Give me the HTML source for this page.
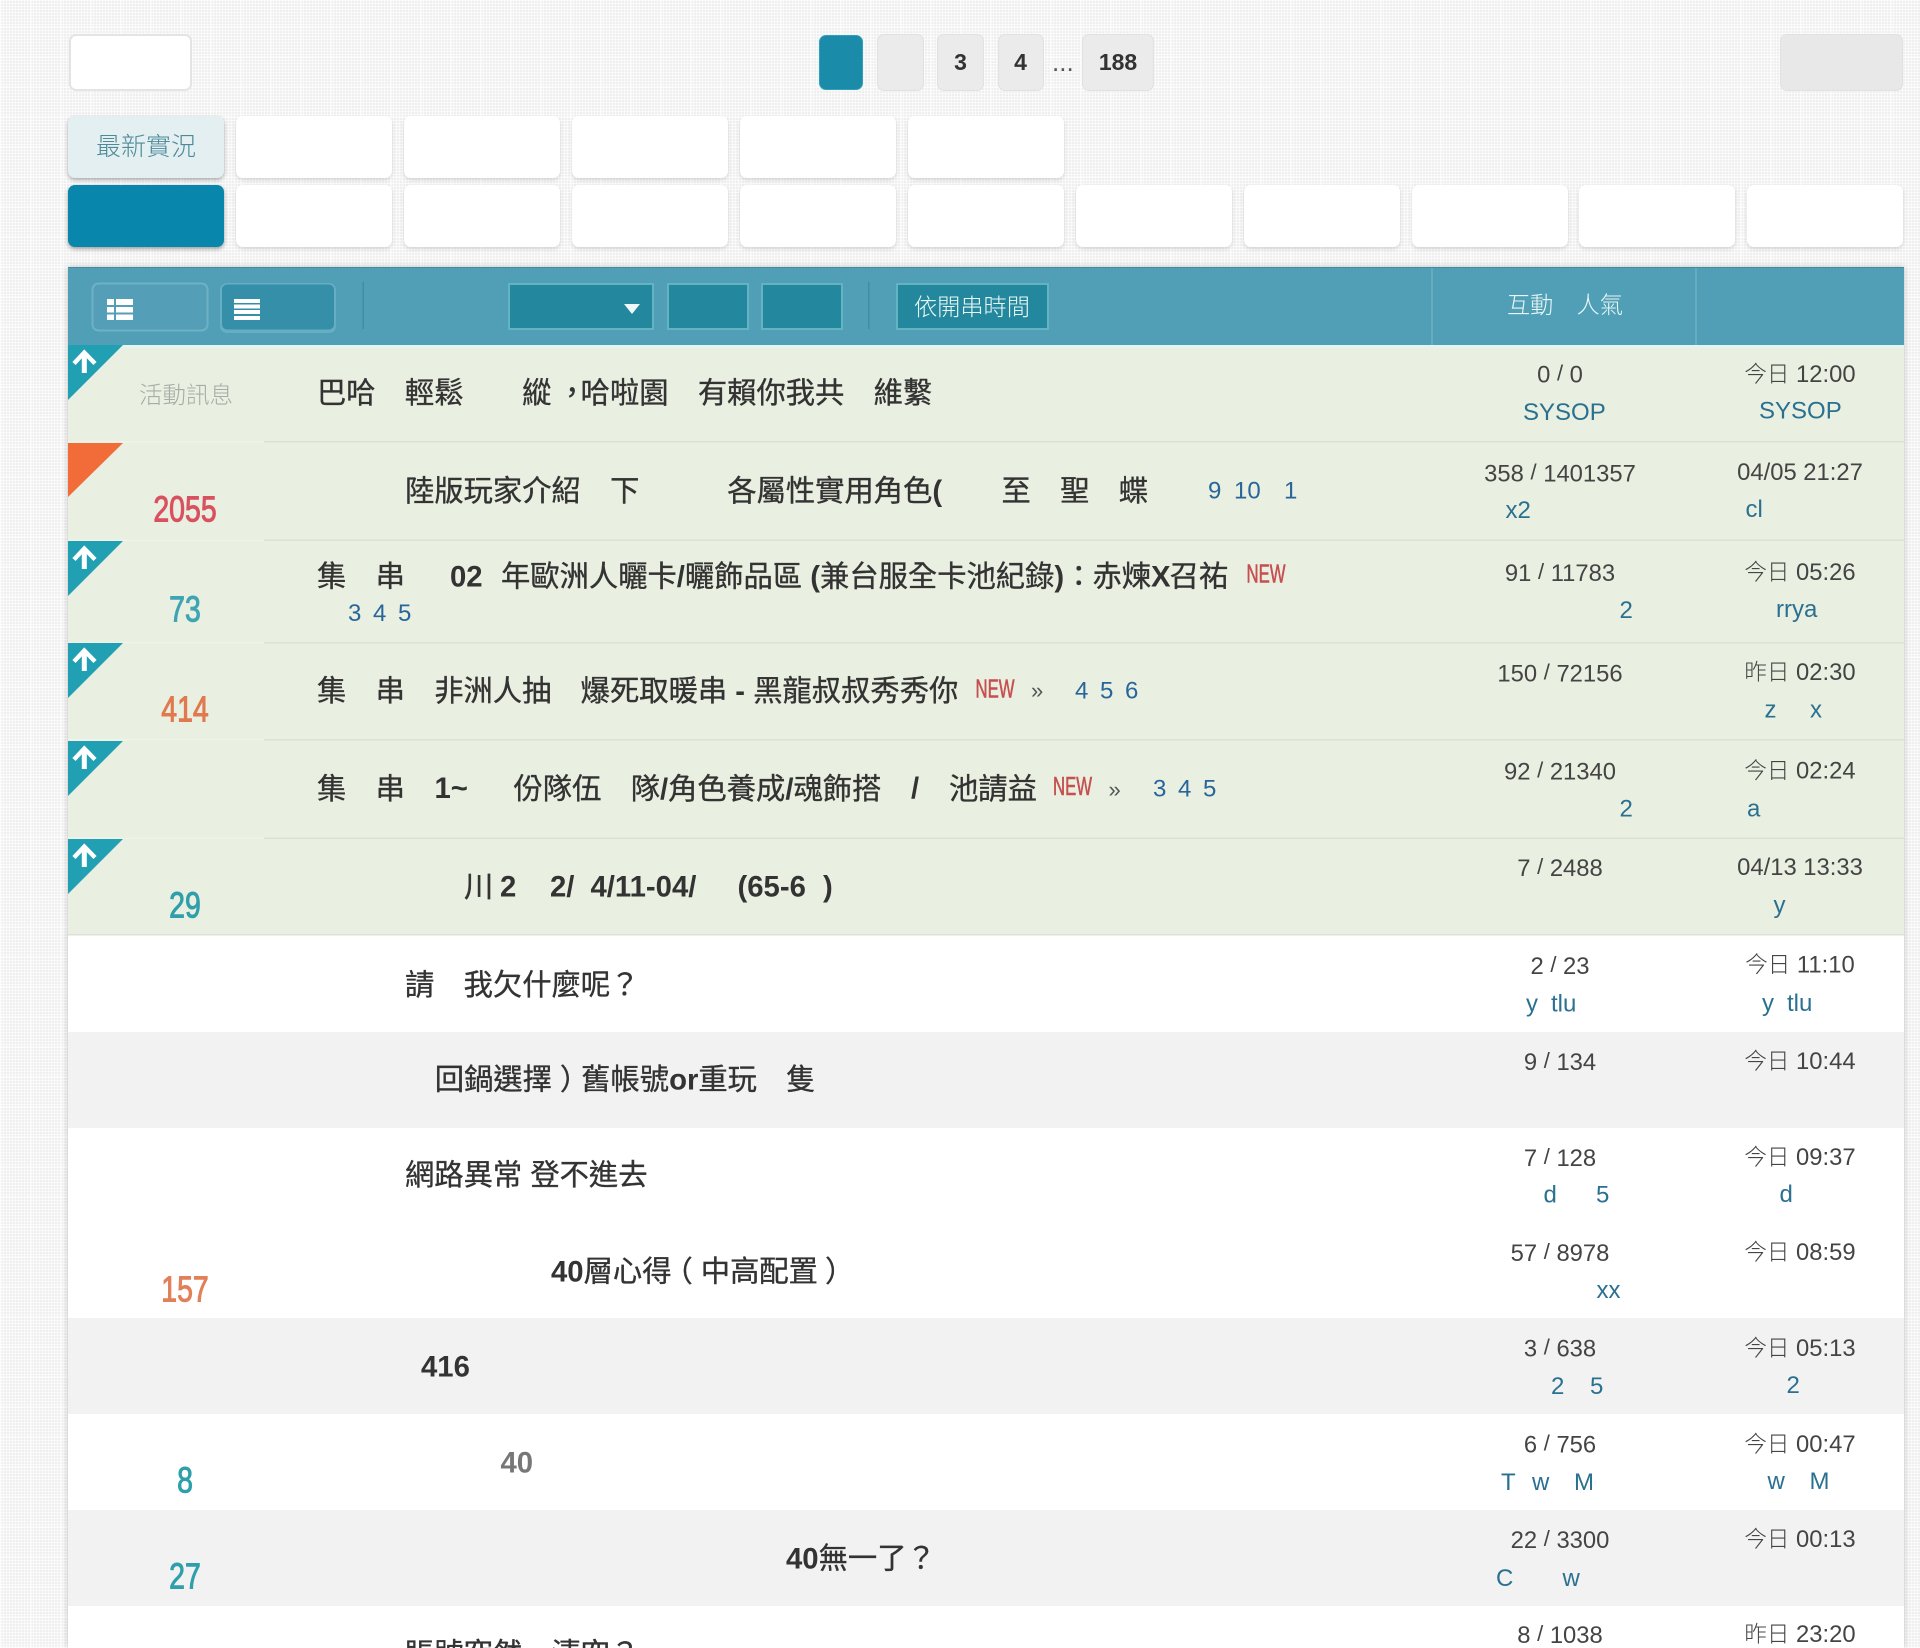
<!DOCTYPE html>
<html lang="zh-Hant"><head><meta charset="utf-8"><title>最新實況</title>
<style>
html,body{margin:0;padding:0;width:1920px;height:1648px;overflow:hidden}
body{position:relative;background-color:#efefef;
background-image:repeating-linear-gradient(0deg,rgba(255,255,255,.6) 0 1px,transparent 1px 3px),repeating-linear-gradient(90deg,rgba(255,255,255,.6) 0 1px,transparent 1px 3px),repeating-linear-gradient(0deg,rgba(255,255,255,.45) 0 2px,transparent 2px 30px),repeating-linear-gradient(90deg,rgba(255,255,255,.45) 0 2px,transparent 2px 30px);}
.tab{position:absolute;width:156px;height:62px;background:#fff;border-radius:7px;box-shadow:0 2px 4px rgba(0,0,0,.13)}
.r1{top:116px}.r2{top:185px}
.pg{position:absolute;top:34px;height:57px;box-sizing:border-box;border:1.5px solid #e1e1e1;background:#ebebeb;border-radius:7px}
.tb{position:absolute;left:68px;top:267px;width:1836px;height:1381px;background:#fff;box-shadow:0 0 6px rgba(0,0,0,.22)}
svg{position:absolute;left:0;top:0}
text{white-space:pre;font-family:"Liberation Sans","Noto Sans CJK TC",sans-serif}
.t{font-size:29.3px;font-weight:400;fill:#333;stroke:#333;stroke-width:.35px}
.b{font-weight:700;stroke:none}
.s{font-size:23.8px;fill:#444}
.m{font-size:23.8px;fill:#444;text-anchor:middle}
.cj{font-size:22.5px;font-weight:300}
.sl{font-size:22px}
.l{font-size:24px;fill:#2a7090}
.p{font-size:24px;fill:#28659a}
.n{font-size:26px;fill:#c5504f;stroke:#c5504f;stroke-width:.6px}
.g{font-size:36px;text-anchor:middle;stroke-width:1px}
.h{font-size:23.2px;font-weight:300;fill:#e8f7f6}
.q{font-size:22px;fill:#555}
</style></head><body>
<div class="pg" style="left:69px;width:123px;background:#fff;border:2px solid #e4e4e4"></div>
<div class="pg" style="left:819px;width:44px;top:35px;height:55px;background:#1a8ba8;border-color:#2fa0bb"></div>
<div class="pg" style="left:877px;width:47px"></div>
<div class="pg" style="left:937px;width:47px"></div>
<div class="pg" style="left:998px;width:46px"></div>
<div class="pg" style="left:1082px;width:72px"></div>
<div class="pg" style="left:1780px;width:123px;background:#e8e8e8"></div>

<div class="tab r1" style="left:68px;background:#e4eff1;box-shadow:0 2px 4px rgba(0,0,0,.3)"></div>
<div class="tab r1" style="left:236px"></div><div class="tab r1" style="left:404px"></div><div class="tab r1" style="left:572px"></div><div class="tab r1" style="left:740px"></div><div class="tab r1" style="left:908px"></div>
<div class="tab r2" style="left:68px;background:#0986ab;box-shadow:0 2px 4px rgba(0,0,0,.35)"></div>
<div class="tab r2" style="left:236px"></div><div class="tab r2" style="left:404px"></div><div class="tab r2" style="left:572px"></div><div class="tab r2" style="left:740px"></div><div class="tab r2" style="left:908px"></div><div class="tab r2" style="left:1076px"></div><div class="tab r2" style="left:1244px"></div><div class="tab r2" style="left:1412px"></div><div class="tab r2" style="left:1579px"></div><div class="tab r2" style="left:1747px"></div>
<div class="tb"></div>

<svg width="1920" height="1648" viewBox="0 0 1920 1648" xmlns="http://www.w3.org/2000/svg">
<!-- rows -->
<rect x="68" y="345" width="1836" height="590" fill="#e9efe1"/>
<rect x="68" y="1032" width="1836" height="96" fill="#f2f2f2"/>
<rect x="68" y="1318" width="1836" height="96" fill="#f2f2f2"/>
<rect x="68" y="1510" width="1836" height="96" fill="#f2f2f2"/>
<g fill="#dce1d5">
<rect x="264" y="441" width="1640" height="1.5"/><rect x="264" y="539.5" width="1640" height="1.5"/><rect x="264" y="642" width="1640" height="1.5"/><rect x="264" y="739" width="1640" height="1.5"/><rect x="264" y="837.5" width="1640" height="1.5"/><rect x="68" y="934" width="1836" height="1.5"/>
</g>
<g fill="#eff3ea">
<rect x="68" y="441" width="196" height="1.5"/><rect x="68" y="539.5" width="196" height="1.5"/><rect x="68" y="642" width="196" height="1.5"/><rect x="68" y="739" width="196" height="1.5"/><rect x="68" y="837.5" width="196" height="1.5"/>
</g>
<!-- header -->
<rect x="68" y="267" width="1836" height="78" fill="#509fb7"/>
<rect x="68" y="267" width="1836" height="1" fill="#44899e"/>
<rect x="68" y="345" width="1836" height="3" fill="#e2f5ef"/>
<rect x="1431.5" y="268" width="1" height="77" fill="#7cb8ca"/>
<rect x="1695.5" y="268" width="1" height="77" fill="#7cb8ca"/>
<rect x="92.5" y="283.5" width="115" height="47" rx="6" fill="#549fb7" stroke="#6eb1c5" stroke-width="2"/>
<rect x="220" y="283" width="116" height="50" rx="7" fill="#67aec4"/>
<rect x="222" y="284.5" width="112" height="45" rx="5" fill="#368fa9"/>
<g fill="#fff">
<rect x="107" y="299" width="7" height="6"/><rect x="107" y="307" width="7" height="5.5"/><rect x="107" y="314.5" width="7" height="5.5"/>
<rect x="116" y="299" width="17" height="6"/><rect x="116" y="307" width="17" height="5.5"/><rect x="116" y="314.5" width="17" height="5.5"/>
<rect x="234" y="299" width="26" height="4"/><rect x="234" y="304.5" width="26" height="4"/><rect x="234" y="310" width="26" height="4"/><rect x="234" y="316" width="26" height="4"/>
</g>
<rect x="362.5" y="282" width="1.5" height="47" fill="#3f8ea6"/>
<rect x="868" y="282" width="1.5" height="47" fill="#3f8ea6"/>
<g fill="#23889d" stroke="#63b3c3" stroke-width="2">
<rect x="509" y="284" width="144" height="45"/><rect x="668" y="284" width="80" height="45"/><rect x="762" y="284" width="80" height="45"/><rect x="897" y="284" width="151" height="45"/>
</g>
<polygon points="624,304 640,304 632,314" fill="#eef8f8"/>
<text class="h" x="914" y="315">依開串時間</text>
<text class="h" x="1507" y="313">互動　人氣</text>
<text x="96" y="155" style="font-size:25px;font-weight:300;fill:#4d8a99">最新實況</text>
<!-- pagination -->
<g style="font-weight:700;font-size:23px;fill:#333;text-anchor:middle">
<text x="960.5" y="70" class="b">3</text><text x="1020.5" y="70" class="b">4</text><text x="1118" y="70" class="b">188</text>
</g>
<text x="1052" y="71" style="font-size:26px;fill:#555">...</text>
<!-- triangles -->
<defs><g id="ar"><path d="M84.3 352V373" stroke="#fff" stroke-width="5" fill="none"/><path d="M74 363.5L84.3 352.5L95 363.5" stroke="#fff" stroke-width="4.4" fill="none"/></g></defs>
<polygon points="68,345 123,345 68,400" fill="#22a0b3"/><use href="#ar"/>
<polygon points="68,443 123,443 68,497" fill="#f26c3a"/>
<polygon points="68,541 123,541 68,596" fill="#22a0b3"/><use href="#ar" y="196"/>
<polygon points="68,643 123,643 68,698" fill="#22a0b3"/><use href="#ar" y="298"/>
<polygon points="68,741 123,741 68,796" fill="#22a0b3"/><use href="#ar" y="396"/>
<polygon points="68,839 123,839 68,894" fill="#22a0b3"/><use href="#ar" y="494"/>
<!-- gp -->
<text x="186" y="403" style="font-size:23.5px;font-weight:300;fill:#a8aca6;text-anchor:middle">活動訊息</text>
<g class="gp">
<text class="g" transform="translate(185,521.7) scale(.79,1)" style="fill:#d9505e;stroke:#d9505e">2055</text>
<text class="g" transform="translate(185,621.7) scale(.79,1)" style="fill:#3fa4b3;stroke:#3fa4b3">73</text>
<text class="g" transform="translate(185,721.7) scale(.79,1)" style="fill:#e07a4e;stroke:#e07a4e">414</text>
<text class="g" transform="translate(185,917.3) scale(.79,1)" style="fill:#2f9fab;stroke:#2f9fab">29</text>
<text class="g" transform="translate(185,1301.7) scale(.79,1)" style="fill:#e2805a;stroke:#e2805a">157</text>
<text class="g" transform="translate(185,1492.7) scale(.79,1)" style="fill:#2f9fab;stroke:#2f9fab">8</text>
<text class="g" transform="translate(185,1588.3) scale(.79,1)" style="fill:#2f9fab;stroke:#2f9fab">27</text>
</g>
<!-- titles -->
<text class="t" x="317" y="403">巴哈　輕鬆　　縱<tspan dx="6">，</tspan><tspan dx="-6">哈啦園　有賴你我共　維繫</tspan></text>
<text class="t" x="405" y="501">陸版玩家介紹　下　　　各屬性實用角色<tspan class="b">(</tspan></text>
<text class="t" x="1001.5" y="501">至　聖　蝶</text>
<text class="p" x="1208" y="498.5">9</text><text class="p" x="1234" y="498.5">10</text><text class="p" x="1284" y="498.5">1</text>
<text class="t" x="317" y="586.7">集　串</text>
<text class="t b" x="450" y="586.7">02</text>
<text class="t" x="501" y="586.7">年歐洲人曬卡<tspan class="b">/</tspan>曬飾品區<tspan class="b"> (</tspan>兼台服全卡池紀錄<tspan class="b">)</tspan>：<tspan dx="-1">赤煉</tspan><tspan class="b">X</tspan><tspan dx="-1">召祐</tspan></text>
<text class="n" x="1246.5" y="582.7" textLength="39" lengthAdjust="spacingAndGlyphs">NEW</text>
<text class="p" x="348 373 398" y="621">345</text>
<text class="t" x="317" y="701">集　串　非洲人抽　爆死取暖串<tspan class="b"> - </tspan>黑龍叔叔秀秀你</text>
<text class="n" x="975.5" y="697.7" textLength="39" lengthAdjust="spacingAndGlyphs">NEW</text>
<text class="q" x="1031" y="698">»</text>
<text class="p" x="1075 1100 1125" y="698.7">456</text>
<text class="t" x="317" y="799">集　串</text>
<text class="t b" x="434.5" y="798">1~</text>
<text class="t" x="513.5" y="799">份隊伍　隊<tspan class="b">/</tspan>角色養成<tspan class="b">/</tspan>魂飾搭</text>
<text class="t b" x="911" y="798">/</text>
<text class="t" x="949" y="799">池請益</text>
<text class="n" x="1053" y="795" textLength="39" lengthAdjust="spacingAndGlyphs">NEW</text>
<text class="q" x="1108.5" y="797">»</text>
<text class="p" x="1153 1178 1203" y="796.7">345</text>
<text class="t" x="464" y="897">川</text>
<text class="t b" x="500" y="896.7">2</text>
<text class="t b" x="550" y="896.7">2/</text>
<text class="t b" x="590.5" y="896.7">4/11-04/</text>
<text class="t b" x="737.5" y="896.7">(65-6</text>
<text class="t b" x="823" y="896.7">)</text>
<text class="t" x="405" y="995">請　我欠什麼呢？</text>
<text class="t" x="434.7" y="1089.3">回鍋選擇<tspan dx="8">）</tspan><tspan dx="-8">舊帳號</tspan><tspan class="b">or</tspan>重玩　隻</text>
<text class="t" x="405" y="1185">網路異常 登不進去</text>
<text class="t" x="551" y="1281.7"><tspan class="b">40</tspan>層心得<tspan dx="-8">（</tspan><tspan dx="8">中高配置</tspan><tspan dx="7">）</tspan></text>
<text class="t b" x="421" y="1376.7">416</text>
<text class="t b" x="500.5" y="1472.7" style="fill:#777">40</text>
<text class="t" x="786" y="1568.5"><tspan class="b">40</tspan>無一了？</text>
<text class="t" x="405" y="1664">賬號突然　清空？</text>
<!-- stats -->
<g text-anchor="middle">
<text class="s" x="1560" y="382.7">0 <tspan class="sl" dy="-2">/</tspan><tspan dy="2"> 0</tspan></text>
<text class="s" x="1560" y="481.7">358 <tspan class="sl" dy="-2">/</tspan><tspan dy="2"> 1401357</tspan></text>
<text class="s" x="1560" y="581">91 <tspan class="sl" dy="-2">/</tspan><tspan dy="2"> 11783</tspan></text>
<text class="s" x="1560" y="681.7">150 <tspan class="sl" dy="-2">/</tspan><tspan dy="2"> 72156</tspan></text>
<text class="s" x="1560" y="779.3">92 <tspan class="sl" dy="-2">/</tspan><tspan dy="2"> 21340</tspan></text>
<text class="s" x="1560" y="876">7 <tspan class="sl" dy="-2">/</tspan><tspan dy="2"> 2488</tspan></text>
<text class="s" x="1560" y="974">2 <tspan class="sl" dy="-2">/</tspan><tspan dy="2"> 23</tspan></text>
<text class="s" x="1560" y="1070">9 <tspan class="sl" dy="-2">/</tspan><tspan dy="2"> 134</tspan></text>
<text class="s" x="1560" y="1166">7 <tspan class="sl" dy="-2">/</tspan><tspan dy="2"> 128</tspan></text>
<text class="s" x="1560" y="1261">57 <tspan class="sl" dy="-2">/</tspan><tspan dy="2"> 8978</tspan></text>
<text class="s" x="1560" y="1356.7">3 <tspan class="sl" dy="-2">/</tspan><tspan dy="2"> 638</tspan></text>
<text class="s" x="1560" y="1452.7">6 <tspan class="sl" dy="-2">/</tspan><tspan dy="2"> 756</tspan></text>
<text class="s" x="1560" y="1548">22 <tspan class="sl" dy="-2">/</tspan><tspan dy="2"> 3300</tspan></text>
<text class="s" x="1560" y="1643">8 <tspan class="sl" dy="-2">/</tspan><tspan dy="2"> 1038</tspan></text>
</g>
<!-- times -->
<text class="m" x="1800" y="382"><tspan class="cj">今日</tspan> 12:00</text>
<text class="m" x="1800" y="480">04/05 21:27</text>
<text class="m" x="1800" y="580"><tspan class="cj">今日</tspan> 05:26</text>
<text class="m" x="1800" y="680"><tspan class="cj">昨日</tspan> 02:30</text>
<text class="m" x="1800" y="778.7"><tspan class="cj">今日</tspan> 02:24</text>
<text class="m" x="1800" y="875">04/13 13:33</text>
<text class="m" x="1800" y="972.7"><tspan class="cj">今日</tspan> 11:10</text>
<text class="m" x="1800" y="1069"><tspan class="cj">今日</tspan> 10:44</text>
<text class="m" x="1800" y="1165"><tspan class="cj">今日</tspan> 09:37</text>
<text class="m" x="1800" y="1260"><tspan class="cj">今日</tspan> 08:59</text>
<text class="m" x="1800" y="1356"><tspan class="cj">今日</tspan> 05:13</text>
<text class="m" x="1800" y="1452"><tspan class="cj">今日</tspan> 00:47</text>
<text class="m" x="1800" y="1547"><tspan class="cj">今日</tspan> 00:13</text>
<text class="m" x="1800" y="1642"><tspan class="cj">昨日</tspan> 23:20</text>
<!-- users -->
<text class="l" x="1523" y="420">SYSOP</text><text class="l" x="1759" y="418.7">SYSOP</text>
<text class="l" x="1505.5" y="518">x2</text><text class="l" x="1745.5" y="517">cl</text>
<text class="l" x="1619.5" y="618">2</text><text class="l" x="1776" y="617">rrya</text>
<text class="l" x="1764.5" y="717.7">z</text><text class="l" x="1810" y="717.7">x</text>
<text class="l" x="1619.5" y="816.7">2</text><text class="l" x="1747" y="816.7">a</text>
<text class="l" x="1773.5" y="913">y</text>
<text class="l" x="1526" y="1011.7">y</text><text class="l" x="1551" y="1011.7">tlu</text><text class="l" x="1762" y="1011">y</text><text class="l" x="1787" y="1011">tlu</text>
<text class="l" x="1543.5" y="1202.7">d</text><text class="l" x="1596" y="1202.7">5</text><text class="l" x="1779.5" y="1202">d</text>
<text class="l" x="1596.5" y="1298">xx</text>
<text class="l" x="1551" y="1394">2</text><text class="l" x="1590" y="1394">5</text><text class="l" x="1786.5" y="1393">2</text>
<text class="l" x="1501" y="1490">T</text><text class="l" x="1532" y="1490">w</text><text class="l" x="1574" y="1490">M</text><text class="l" x="1767.5" y="1489">w</text><text class="l" x="1809.5" y="1489">M</text>
<text class="l" x="1496" y="1586">C</text><text class="l" x="1562.5" y="1586">w</text>
</svg>
</body></html>
